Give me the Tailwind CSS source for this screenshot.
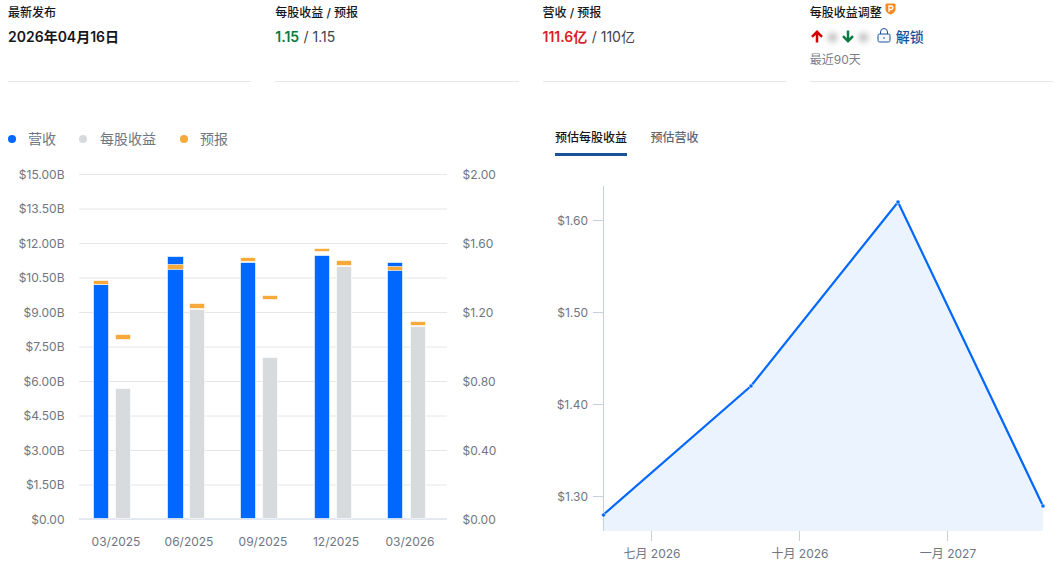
<!DOCTYPE html>
<html lang="zh">
<head>
<meta charset="utf-8">
<script src="https://cdn.jsdelivr.net/npm/@tailwindcss/browser@4"></script>
</head>
<body class="bg-white font-['Inter','Noto_Sans_CJK_SC',sans-serif] text-[#14171c] w-[1060px] h-[564px] overflow-hidden">
<div class="grid grid-cols-4 gap-x-6 pl-2 pr-[7px]">
  <div class="h-[82px] border-b border-[#e6e7eb] pt-[5px]">
    <div class="text-xs leading-4 font-medium">最新发布</div>
    <div class="text-sm leading-5 font-semibold mt-[6px]">2026年04月16日</div>
  </div>
  <div class="h-[82px] border-b border-[#e6e7eb] pt-[5px]">
    <div class="text-xs leading-4 font-medium">每股收益 / 预报</div>
    <div class="text-sm leading-5 mt-[6px]"><span class="font-semibold text-[#0a7a3e]">1.15</span> <span class="text-[#3c4350] ml-[0.5px]">/ 1.15</span></div>
  </div>
  <div class="h-[82px] border-b border-[#e6e7eb] pt-[5px]">
    <div class="text-xs leading-4 font-medium">营收 / 预报</div>
    <div class="text-sm leading-5 mt-[6px]"><span class="font-semibold text-[#d91f1f]">111.6亿</span> <span class="text-[#3c4350] ml-[0.5px]">/ 110亿</span></div>
  </div>
  <div class="h-[82px] border-b border-[#e6e7eb] pt-[5px] relative">
    <div class="text-xs leading-4 font-medium flex">每股收益调整
      <svg class="ml-[3px] -mt-[2px]" width="11" height="12" viewBox="0 0 11 12"><path d="M1.500 .5h8a1 1 0 0 1 1 1v5c0 2.500-2.500 4-5 5c-2.500-1-5-2.500-5-5v-5a1 1 0 0 1 1-1z" fill="#f58b1f"/><path d="M4 9V3h2.200a1.700 1.700 0 0 1 0 3.500H4" fill="none" stroke="#fff" stroke-width="1.300"/></svg>
    </div>
    <div class="flex items-center h-5 mt-[6px]">
      <svg class="ml-px -mt-[2px]" width="12" height="13" viewBox="0 0 12 13"><path d="M6 12.500V2M1 6.800l5-5 5 5" fill="none" stroke="#d00000" stroke-width="2.500"/></svg>
      <span class="w-[9px] h-[9px] rounded-full bg-[#b4b4b4] blur-[3px] ml-[5px]"></span>
      <svg class="ml-[5px] -mt-[2px]" width="12" height="13" viewBox="0 0 12 13"><path d="M6 .5V11M1 6.200l5 5 5-5" fill="none" stroke="#0a7a3e" stroke-width="2.500"/></svg>
      <span class="w-[9px] h-[9px] rounded-full bg-[#b4b4b4] blur-[3px] ml-[5px]"></span>
      <svg class="ml-[9px] -mt-[3px]" width="14" height="15" viewBox="0 0 14 15"><rect x="1" y="6" width="12" height="8" rx="1.500" fill="#f4f7fb" stroke="#1a5299"/><path d="M3.500 6V4a3.500 3.500 0 0 1 7 0v2" fill="none" stroke="#1a5299"/><path d="M7 9.300v1.400" stroke="#1a5299" stroke-width="1.200"/></svg>
      <span class="text-sm font-medium text-[#1a5299] ml-[5px]">解锁</span>
    </div>
    <div class="text-xs leading-4 text-[#7a808a] mt-[5px]">最近90天</div>
  </div>
</div>

<div class="flex mt-[45px]">
  <div class="w-[547px] pl-2">
    <div class="h-6 flex items-center text-sm text-[#6f7682]">
      <span class="w-2 h-2 rounded-full bg-[#0068ff]"></span><span class="ml-3">营收</span>
      <span class="w-2 h-2 rounded-full bg-[#d8dbde] ml-[23px]"></span><span class="ml-[13px]">每股收益</span>
      <span class="w-2 h-2 rounded-full bg-[#f7a93b] ml-[24px]"></span><span class="ml-3">预报</span>
    </div>
    <svg class="block" width="530" height="413" viewBox="8 151 530 413" font-size="12" fill="#6f7682">
      <g stroke="#e6e6e6" stroke-width="1">
        <path d="M79 174.500H447M79 209H447M79 243.500H447M79 278H447M79 312.500H447M79 347H447M79 381.500H447M79 416H447M79 450.500H447M79 485H447"/>
      </g>
      <path d="M79 519H447" stroke="#c8d0e0"/>
      <g text-anchor="end">
        <text x="64.500" y="179">$15.00B</text><text x="64.500" y="213">$13.50B</text><text x="64.500" y="248">$12.00B</text><text x="64.500" y="282">$10.50B</text><text x="64.500" y="317">$9.00B</text><text x="64.500" y="351">$7.50B</text><text x="64.500" y="386">$6.00B</text><text x="64.500" y="420">$4.50B</text><text x="64.500" y="455">$3.00B</text><text x="64.500" y="489">$1.50B</text><text x="64.500" y="524">$0.00</text>
      </g>
      <g>
        <text x="462.500" y="179">$2.00</text><text x="462.500" y="248">$1.60</text><text x="462.500" y="317">$1.20</text><text x="462.500" y="386">$0.80</text><text x="462.500" y="455">$0.40</text><text x="462.500" y="524">$0.00</text>
      </g>
      <g text-anchor="middle">
        <text x="116" y="546">03/2025</text><text x="189" y="546">06/2025</text><text x="263" y="546">09/2025</text><text x="336" y="546">12/2025</text><text x="410" y="546">03/2026</text>
      </g>
      <g stroke="#fff" stroke-opacity=".6">
        <g fill="#0068ff">
          <rect x="93.500" y="284.500" width="15" height="234"/>
          <rect x="167.500" y="256.500" width="16" height="262"/>
          <rect x="240.500" y="262.500" width="15" height="256"/>
          <rect x="314.500" y="255.500" width="15" height="263"/>
          <rect x="387.500" y="262.500" width="15" height="256"/>
        </g>
        <g fill="#d8dbde">
          <rect x="115.500" y="388.500" width="15" height="130"/>
          <rect x="189.500" y="309.500" width="15" height="209"/>
          <rect x="262.500" y="357.500" width="15" height="161"/>
          <rect x="336.500" y="266.500" width="15" height="252"/>
          <rect x="410.500" y="326.500" width="15" height="192"/>
        </g>
        <g fill="#f7a93b">
          <rect x="93.500" y="280.500" width="15" height="4"/>
          <rect x="115.500" y="334.500" width="15" height="5"/>
          <rect x="167.500" y="264.500" width="16" height="5"/>
          <rect x="189.500" y="303.500" width="15" height="5"/>
          <rect x="240.500" y="257.500" width="15" height="4"/>
          <rect x="262.500" y="295.500" width="15" height="4"/>
          <rect x="314.500" y="248.500" width="15" height="3"/>
          <rect x="336.500" y="260.500" width="15" height="5"/>
          <rect x="387.500" y="266.500" width="15" height="4"/>
          <rect x="410.500" y="321.500" width="15" height="4"/>
        </g>
      </g>
    </svg>
  </div>
  <div class="flex-1 pl-2">
    <div class="flex h-[28px] text-xs font-medium">
      <span class="h-[29px] leading-4 pt-[3px] border-b-[3px] border-[#1a5299]">预估每股收益</span>
      <span class="ml-[23.500px] leading-4 pt-[3px] text-[#5f6772]">预估营收</span>
    </div>
    <svg class="block -ml-[8px]" width="513" height="409" viewBox="547 155 513 409" font-size="12" fill="#6f7682">
      <path d="M603 515L751 386L898 202L1043 506V531H603Z" fill="#ebf3ff"/>
      <path d="M603.500 186V531" stroke="#c8d0e0"/>
      <path d="M593 220.500H603M593 312.500H603M593 404.500H603M593 496.500H603" stroke="#c8d0e0"/>
      <path d="M651.500 531V541M799.500 531V541M947.500 531V541" stroke="#c8d0e0"/>
      <g text-anchor="end">
        <text x="588" y="225">$1.60</text><text x="588" y="317">$1.50</text><text x="588" y="409">$1.40</text><text x="588" y="501">$1.30</text>
      </g>
      <g text-anchor="middle">
        <text x="652" y="558">七月 2026</text><text x="800" y="558">十月 2026</text><text x="948" y="558">一月 2027</text>
      </g>
      <path d="M603 515L751 386L898 202L1043 506" fill="none" stroke="#0068ff" stroke-width="2.200"/>
      <g fill="#0068ff" stroke="#fff" stroke-width=".5">
        <circle cx="603.500" cy="515" r="2"/><circle cx="751" cy="386" r="2"/><circle cx="898" cy="202" r="2"/><circle cx="1043" cy="506" r="2"/>
      </g>
    </svg>
  </div>
</div>
</body>
</html>
